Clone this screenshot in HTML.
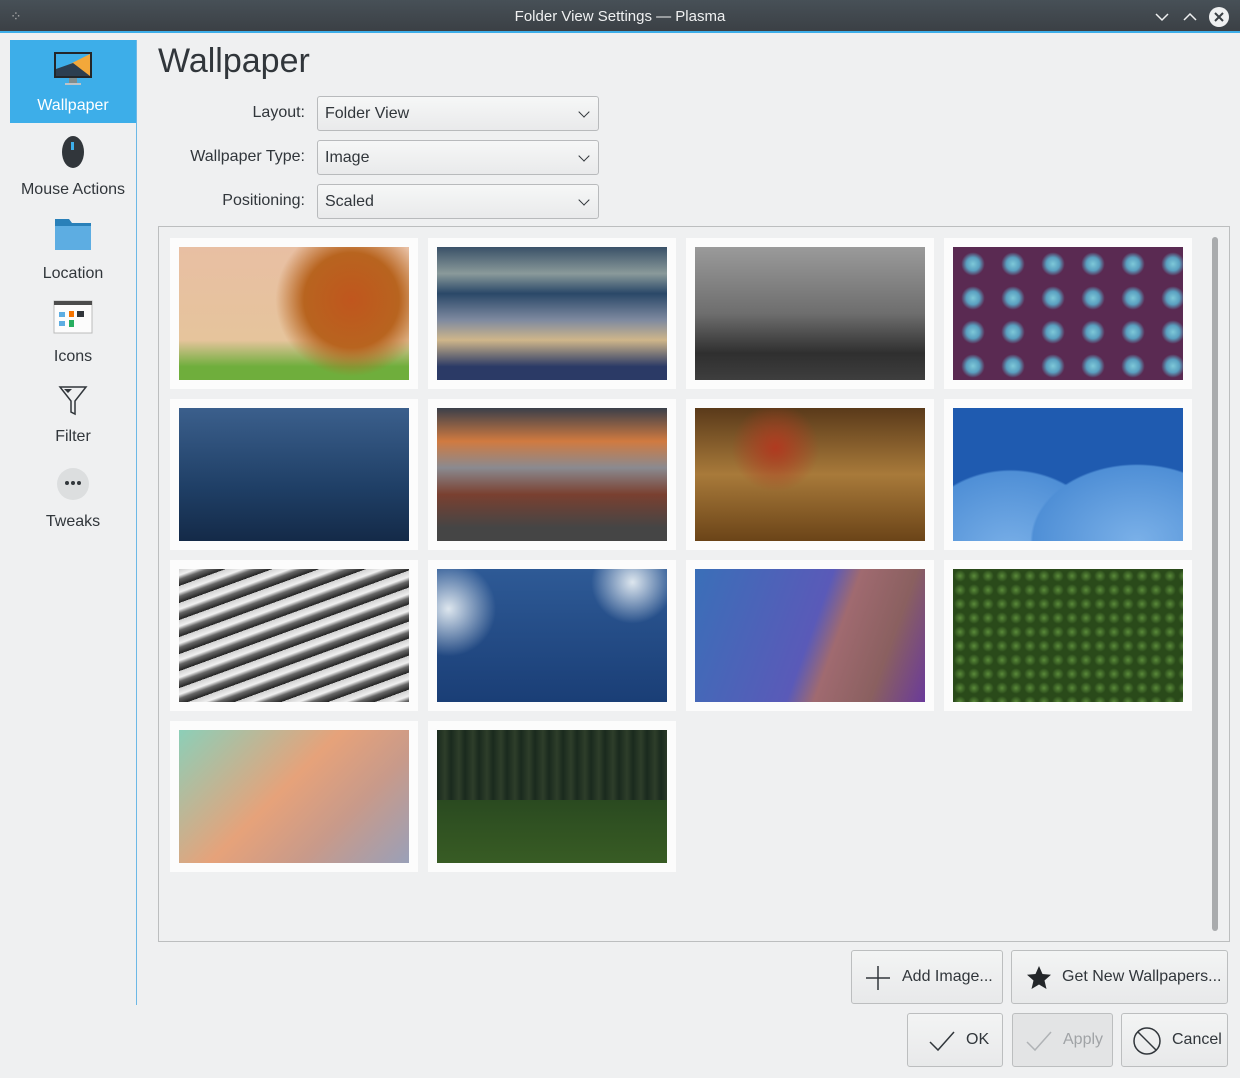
<!DOCTYPE html>
<html><head><meta charset="utf-8"><style>
*{box-sizing:border-box;margin:0;padding:0}
body{width:1240px;height:1078px;background:#eff0f1;font-family:"Liberation Sans",sans-serif;color:#31363b;position:relative;overflow:hidden;font-size:16px}
.abs{position:absolute}
.title{left:0;top:0;width:1240px;height:33px;background:linear-gradient(#475057,#3b4045);border-bottom:2px solid #3daee9;color:#eff0f1;text-align:center;line-height:33px;font-size:15px}
.side{left:10px;top:40px;width:127px;height:965px;border-right:1px solid #6cb8e6}
.item{position:absolute;left:0;width:126px;text-align:center;font-size:16px}
.lbl{text-align:right;width:150px;left:155px;font-size:16px}
.combo{left:317px;width:282px;height:35px;border:1px solid #b8babc;border-radius:3px;background:linear-gradient(#f6f7f7,#e9eaeb);padding-left:7px;line-height:33px;font-size:16px}
.combo:after{content:"";position:absolute;right:10px;top:11px;width:7px;height:7px;border-right:1.5px solid #31363b;border-bottom:1.5px solid #31363b;transform:rotate(45deg)}
.frame{left:158px;top:226px;width:1072px;height:716px;border:1px solid #bcbebf;background:#eff0f1}
.card{position:absolute;width:248px;height:151px;background:#fcfcfc}
.card div{position:absolute;left:9px;top:9px;width:230px;height:133px}
.btn{height:54px;border:1px solid #bcbebf;border-radius:3px;background:linear-gradient(#f3f4f4,#e8e9ea);font-size:16px;line-height:52px}
</style></head><body>
<div class="abs title">Folder View Settings — Plasma
<span style="position:absolute;left:10px;top:0;color:#aaa;font-size:14px">⁘</span>
<svg class="abs" style="left:1154px;top:10px" width="80" height="14"><path d="M2 4l6 6 6-6" stroke="#eff0f1" stroke-width="1.5" fill="none"/><path d="M30 10l6-6 6 6" stroke="#eff0f1" stroke-width="1.5" fill="none"/></svg>
<svg class="abs" style="left:1208px;top:6px" width="22" height="22"><circle cx="11" cy="11" r="10" fill="#eff0f1"/><path d="M7 7l8 8M15 7l-8 8" stroke="#3b4045" stroke-width="2"/></svg>
</div>
<div class="abs side">
 <div class="item" style="top:0;height:83px;background:#3daee9;color:#fff">
  <svg style="margin-top:11px" width="40" height="36"><rect x="1" y="1" width="38" height="26" fill="#232629"/><polygon points="3,3 37,3 37,25 3,25" fill="#f3a83a"/><polygon points="3,3 37,3 3,20" fill="#3daee9"/><polygon points="3,18 20,12 37,25 3,25" fill="#2c3e50"/><rect x="16" y="27" width="8" height="5" fill="#7f8c8d"/><rect x="12" y="32" width="16" height="2" fill="#bdc3c7"/></svg>
  <div style="margin-top:5px">Wallpaper</div></div>
 <div class="item" style="top:94px"><svg width="26" height="36"><ellipse cx="13" cy="18" rx="11" ry="16" fill="#31363b"/><rect x="11" y="8" width="3" height="8" fill="#3daee9"/></svg><div style="margin-top:6px">Mouse Actions</div></div>
 <div class="item" style="top:177px"><svg width="38" height="34"><path d="M1 2h14l3 4h19v26H1z" fill="#2980b9"/><rect x="1" y="9" width="36" height="24" fill="#5dade2"/></svg><div style="margin-top:9px">Location</div></div>
 <div class="item" style="top:260px"><svg width="40" height="34"><rect x="1" y="1" width="38" height="32" fill="#fcfcfc" stroke="#bbb"/><rect x="1" y="1" width="38" height="4" fill="#4d4d4d"/><rect x="6" y="12" width="6" height="5" fill="#5dade2"/><rect x="16" y="11" width="5" height="6" fill="#f67400"/><rect x="24" y="11" width="7" height="6" fill="#31363b"/><rect x="6" y="21" width="6" height="5" fill="#5dade2"/><rect x="16" y="20" width="5" height="7" fill="#27ae60"/></svg><div style="margin-top:9px">Icons</div></div>
 <div class="item" style="top:344px"><svg width="30" height="32"><path d="M2 3h26L17 17v13l-4-2V17z" stroke="#31363b" stroke-width="1.5" fill="none"/><path d="M6 5h8l-4 4z" fill="#31363b"/></svg><div style="margin-top:7px">Filter</div></div>
 <div class="item" style="top:427px"><svg width="34" height="34"><circle cx="17" cy="17" r="16" fill="#dcdedf"/><circle cx="11" cy="16" r="2" fill="#31363b"/><circle cx="17" cy="16" r="2" fill="#31363b"/><circle cx="23" cy="16" r="2" fill="#31363b"/></svg><div style="margin-top:7px">Tweaks</div></div>
</div>
<div class="abs" style="left:158px;top:42px;font-size:34px">Wallpaper</div>
<div class="abs lbl" style="top:104px">Layout:</div>
<div class="abs lbl" style="top:148px">Wallpaper Type:</div>
<div class="abs lbl" style="top:192px">Positioning:</div>
<div class="abs combo" style="top:96px">Folder View</div>
<div class="abs combo" style="top:140px">Image</div>
<div class="abs combo" style="top:184px">Scaled</div>
<div class="abs frame">
<div class="card" style="left:11px;top:11px"><div style="background:radial-gradient(circle at 75% 40%,#c0561e 0,#b8641f 25%,transparent 40%),linear-gradient(#e8bfa3,#e6c49c 70%,#6fae3c 90%)"></div></div>
<div class="card" style="left:269px;top:11px"><div style="background:linear-gradient(#3a5168,#8a9a9a 20%,#2a4868 35%,#7f8aa0 55%,#cfb68a 70%,#2b3a66 90%)"></div></div>
<div class="card" style="left:527px;top:11px"><div style="background:linear-gradient(#9a9a9a,#6e6e6e 50%,#2f2f2f 80%,#3e3e3e)"></div></div>
<div class="card" style="left:785px;top:11px"><div style="background:radial-gradient(circle,#7ec8d8 0,#5aa0c0 25%,#5a2a52 45%) 0 0/40px 34px,#4a2050"></div></div>
<div class="card" style="left:11px;top:172px"><div style="background:linear-gradient(#3b5f8c,#1f3f66 60%,#142a48)"></div></div>
<div class="card" style="left:269px;top:172px"><div style="background:linear-gradient(#3a3f4a,#d07a40 25%,#8a8a90 45%,#7a4030 65%,#454545 90%)"></div></div>
<div class="card" style="left:527px;top:172px"><div style="background:radial-gradient(circle at 35% 30%,#b03a20,transparent 25%),linear-gradient(#5a3a1a,#a87a3a 50%,#6b4418)"></div></div>
<div class="card" style="left:785px;top:172px"><div style="background:radial-gradient(ellipse at 80% 100%,#7ab0e8 0,#4f8fd6 40%,transparent 41%),radial-gradient(ellipse at 25% 110%,#7ab0e8 0,#4f8fd6 40%,transparent 41%),#1f5bb0"></div></div>
<div class="card" style="left:11px;top:333px"><div style="background:repeating-linear-gradient(160deg,#d0d0d0 0,#f0f0f0 6px,#666 10px,#222 16px)"></div></div>
<div class="card" style="left:269px;top:333px"><div style="background:radial-gradient(circle at 5% 30%,#dde6ee,transparent 20%),radial-gradient(circle at 85% 10%,#dde6ee,transparent 18%),linear-gradient(#2e5a96,#1a3e76)"></div></div>
<div class="card" style="left:527px;top:333px"><div style="background:linear-gradient(110deg,#3a6fb8 0,#5a5ab8 50%,#a06a70 60%,#8a6060 80%,#6a3a9a)"></div></div>
<div class="card" style="left:785px;top:333px"><div style="background:radial-gradient(circle,#5a8a3a 0,#2a4a1a 60%) 0 0/14px 14px,#1f3a14"></div></div>
<div class="card" style="left:11px;top:494px"><div style="background:linear-gradient(135deg,#8ccfb8,#e6a27a 45%,#c89a8a 70%,#9aa0b8)"></div></div>
<div class="card" style="left:269px;top:494px"><div style="background:repeating-linear-gradient(90deg,#1a2a1e 0,#2e3e2a 8px,#1a2a1e 14px),#223a20"><div style="left:0;top:70px;width:230px;height:63px;background:linear-gradient(#2a4a20,#385c24)"></div></div></div>
<div class="abs" style="left:1053px;top:10px;width:6px;height:694px;border-radius:3px;background:#a9abad"></div>
</div>
<div class="abs btn" style="left:851px;top:950px;width:152px"><svg class="abs" style="left:13px;top:14px" width="26" height="26"><path d="M13 1v24M1 13h24" stroke="#31363b" stroke-width="1.5"/></svg><span style="position:absolute;left:50px">Add Image...</span></div>
<div class="abs btn" style="left:1011px;top:950px;width:217px"><svg class="abs" style="left:14px;top:14px" width="26" height="26"><path d="M13 1l3.5 8 8.5.8-6.5 5.7 2 8.5-7.5-4.5-7.5 4.5 2-8.5L1 9.8 9.5 9z" fill="#232629"/></svg><span style="position:absolute;left:50px">Get New Wallpapers...</span></div>
<div class="abs btn" style="left:907px;top:1013px;width:96px"><svg class="abs" style="left:20px;top:15px" width="28" height="24"><path d="M2 13l8 8L26 3" stroke="#31363b" stroke-width="1.5" fill="none"/></svg><span style="position:absolute;left:58px">OK</span></div>
<div class="abs btn" style="left:1012px;top:1013px;width:101px;background:#e3e4e5;color:#a0a3a6"><svg class="abs" style="left:12px;top:15px" width="28" height="24"><path d="M2 13l8 8L26 3" stroke="#b0b3b6" stroke-width="1.5" fill="none"/></svg><span style="position:absolute;left:50px">Apply</span></div>
<div class="abs btn" style="left:1121px;top:1013px;width:107px"><svg class="abs" style="left:10px;top:12px" width="30" height="30"><circle cx="15" cy="15" r="13" stroke="#31363b" stroke-width="1.5" fill="none"/><path d="M6 6l18 18" stroke="#31363b" stroke-width="1.5"/></svg><span style="position:absolute;left:50px">Cancel</span></div>
</body></html>
